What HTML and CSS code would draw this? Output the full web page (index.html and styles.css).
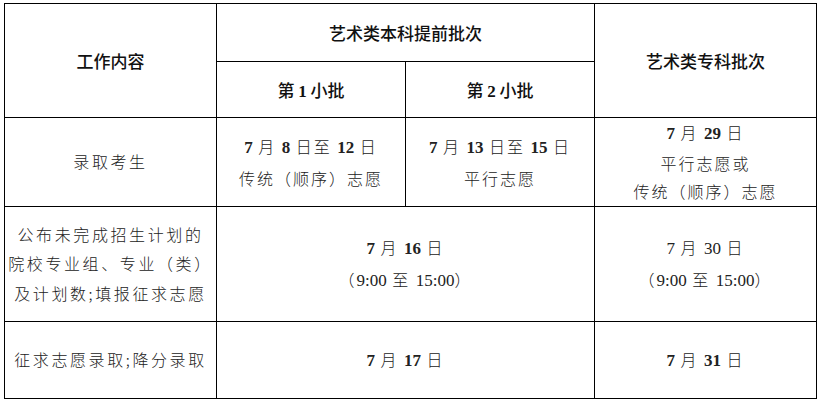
FILE: index.html
```html
<!DOCTYPE html>
<html lang="zh-CN">
<head>
<meta charset="utf-8">
<link rel="stylesheet" href="styles.css">
</head>
<body>
<table class="schedule">
  <colgroup>
    <col class="c1"><col class="c2"><col class="c3"><col class="c4">
  </colgroup>
  <tr class="r1">
    <th rowspan="2">工作内容</th>
    <th colspan="2">艺术类本科提前批次</th>
    <th rowspan="2">艺术类专科批次</th>
  </tr>
  <tr class="r2">
    <th>第 <span class="num">1</span> 小批</th>
    <th>第 <span class="num">2</span> 小批</th>
  </tr>
  <tr class="r3">
    <td class="label">录取考生</td>
    <td><div><b class="num">7</b> 月 <b class="num">8</b> 日至 <b class="num">12</b> 日</div><div>传统（顺序）志愿</div></td>
    <td><div><b class="num">7</b> 月 <b class="num">13</b> 日至 <b class="num">15</b> 日</div><div>平行志愿</div></td>
    <td class="tight"><div><b class="num">7</b> 月 <b class="num">29</b> 日</div><div>平行志愿或</div><div>传统（顺序）志愿</div></td>
  </tr>
  <tr class="r4">
    <td class="label">公布未完成招生计划的<br>院校专业组、专业（类）<br>及计划数;填报征求志愿</td>
    <td colspan="2"><div><b class="num">7</b> 月 <b class="num">16</b> 日</div><div>（<span class="num">9:00</span> 至 <span class="num">15:00</span>）</div></td>
    <td><div><span class="num">7</span> 月 <span class="num">30</span> 日</div><div>（<span class="num">9:00</span> 至 <span class="num">15:00</span>）</div></td>
  </tr>
  <tr class="r5">
    <td class="label">征求志愿录取;降分录取</td>
    <td colspan="2"><div><b class="num">7</b> 月 <b class="num">17</b> 日</div></td>
    <td><div><b class="num">7</b> 月 <b class="num">31</b> 日</div></td>
  </tr>
</table>
</body>
</html>
```

FILE: styles.css
```css
html, body {
  margin: 0;
  background: #ffffff;
}
body {
  padding: 3px 0 0 4px;
}
.schedule {
  border-collapse: collapse;
  table-layout: fixed;
  width: 813px;
  color: #1a1a1a;
}
.schedule col.c1 { width: 212px; }
.schedule col.c2 { width: 189px; }
.schedule col.c3 { width: 189px; }
.schedule col.c4 { width: 222px; }
.schedule th,
.schedule td {
  border: 1px solid #000;
  padding: 0;
  text-align: center;
  vertical-align: middle;
}
.schedule th {
  font-family: "Noto Sans CJK SC", sans-serif;
  font-size: 17px;
  font-weight: 500;
  color: #111;
}
.schedule th .num {
  font-family: "Liberation Serif", serif;
  font-weight: 700;
  font-size: 17px;
}
.schedule td {
  font-family: "Noto Sans CJK SC", sans-serif;
  font-weight: 300;
  font-size: 16px;
  line-height: 30px;
  letter-spacing: 2px;
  color: #222;
}
.schedule td.tight {
  line-height: 28.5px;
}
.schedule td .num {
  font-family: "Liberation Serif", serif;
  font-size: 17px;
  letter-spacing: 0;
}
.schedule td b.num {
  font-weight: 700;
}
.schedule td.label {
  letter-spacing: 2.6px;
  line-height: 29.5px;
}
.r1 { height: 58px; }
.r2 { height: 56px; }
.r3 { height: 89px; }
.r4 { height: 115px; }
.r5 { height: 77px; }
```
